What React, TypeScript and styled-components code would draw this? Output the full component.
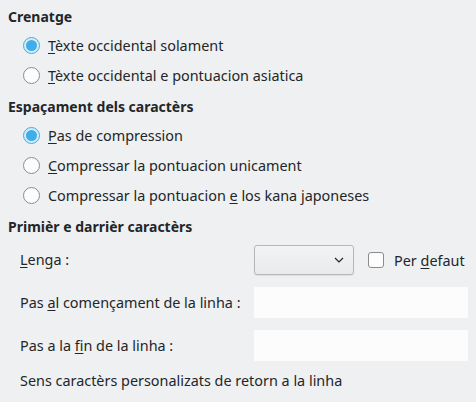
import React from "react";
import styled, { createGlobalStyle } from "styled-components";

const Global = createGlobalStyle`
  html, body { margin: 0; padding: 0; background: #eff0f1; }
  body { font-family: "Noto Sans", sans-serif; font-size: 14.4px; color: #232629; }
`;

const Page = styled.div`
  width: 476px;
  height: 402px;
  box-sizing: border-box;
  padding: 6px 8px 0 8px;
  display: flex;
  flex-direction: column;
`;

const Heading = styled.div`
  font-weight: bold;
  font-size: 14px;
  height: 22px;
  line-height: 22px;
  margin-bottom: 2px;
`;

const Section = styled.div`
  display: flex;
  flex-direction: column;
  margin-bottom: 6px;
`;

const RadioRow = styled.label`
  display: flex;
  align-items: center;
  height: 30px;
  padding-left: 15px;
  gap: 8px;
`;

const RadioCircle = styled.span<{ $on?: boolean }>`
  width: 17px;
  height: 17px;
  box-sizing: border-box;
  border-radius: 50%;
  border: 1px solid ${(p) => (p.$on ? "#3daee9" : "#8a8c8e")};
  background: ${(p) => (p.$on ? "#d4ecf8" : "#fcfcfc")};
  display: flex;
  align-items: center;
  justify-content: center;
  &::after {
    content: "";
    display: ${(p) => (p.$on ? "block" : "none")};
    width: 11px;
    height: 11px;
    border-radius: 50%;
    background: #3daee9;
  }
`;

const U = styled.span`
  text-decoration: underline;
  text-underline-offset: 2px;
`;

const FormGrid = styled.div`
  display: grid;
  grid-template-columns: 234px 1fr;
  grid-template-rows: 30px 31px 31px;
  row-gap: 12px;
  padding-left: 12px;
  margin-top: 5px;
  align-items: center;
`;

const Label = styled.div`
  line-height: 20px;
`;

const LangRow = styled.div`
  display: flex;
  align-items: center;
  gap: 14px;
`;

const Combo = styled.div`
  width: 100px;
  height: 30px;
  box-sizing: border-box;
  border: 1px solid #b5b7b9;
  border-radius: 3px;
  background: linear-gradient(#f2f3f4, #e9eaeb);
  box-shadow: 0 1px 1px rgba(0,0,0,0.08);
  display: flex;
  align-items: center;
  justify-content: flex-end;
  padding-right: 9px;
`;

const Check = styled.span`
  width: 16px;
  height: 16px;
  box-sizing: border-box;
  border: 1px solid #8a8c8e;
  border-radius: 3px;
  background: #fcfcfc;
`;

const CheckLabel = styled.label`
  display: flex;
  align-items: center;
  gap: 10px;
`;

const Input = styled.div`
  width: 214px;
  height: 31px;
  background: #fcfcfc;
`;

const Footer = styled.div`
  padding-left: 12px;
  margin-top: 10px;
  line-height: 20px;
`;

function Radio({ on, children }: { on?: boolean; children: React.ReactNode }) {
  return (
    <RadioRow>
      <RadioCircle $on={on} />
      <span>{children}</span>
    </RadioRow>
  );
}

export default function App() {
  return (
    <>
      <Global />
      <Page>
        <Section>
          <Heading>Crenatge</Heading>
          <Radio on><U>T</U>èxte occidental solament</Radio>
          <Radio><U>T</U>èxte occidental e pontuacion asiatica</Radio>
        </Section>
        <Section>
          <Heading>Espaçament dels caractèrs</Heading>
          <Radio on><U>P</U>as de compression</Radio>
          <Radio><U>C</U>ompressar la pontuacion unicament</Radio>
          <Radio>Compressar la pontuacion <U>e</U> los kana japoneses</Radio>
        </Section>
        <Heading>Primièr e darrièr caractèrs</Heading>
        <FormGrid>
          <Label><U>L</U>enga :</Label>
          <LangRow>
            <Combo>
              <svg width="10" height="6" viewBox="0 0 10 6">
                <path d="M1 1 L5 5 L9 1" fill="none" stroke="#232629" strokeWidth="1.2" />
              </svg>
            </Combo>
            <CheckLabel>
              <Check />
              <span>Per <U>d</U>efaut</span>
            </CheckLabel>
          </LangRow>
          <Label>Pas <U>a</U>l començament de la linha :</Label>
          <Input />
          <Label>Pas a la <U>fi</U>n de la linha :</Label>
          <Input />
        </FormGrid>
        <Footer>Sens caractèrs personalizats de retorn a la linha</Footer>
      </Page>
    </>
  );
}
